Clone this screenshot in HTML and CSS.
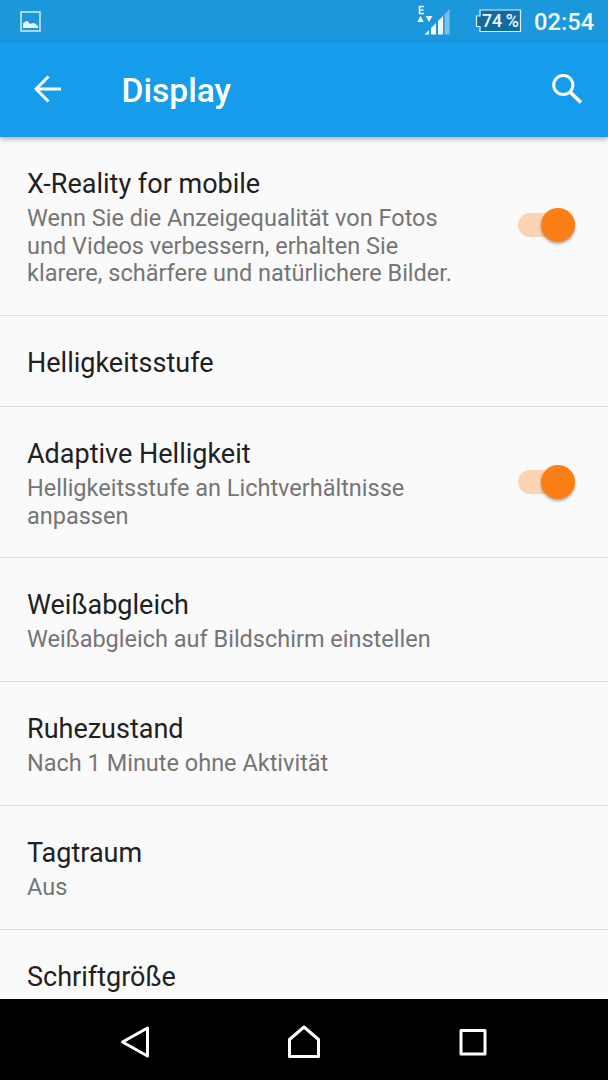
FILE: index.html
```html
<!DOCTYPE html>
<html lang="de">
<head>
<meta charset="utf-8">
<title>Display</title>
<link rel="stylesheet" href="styles.css">
</head>
<body>
<div class="screen">
  <header class="status">
    <svg class="status-image" width="22" height="22" viewBox="0 0 22 22"><rect x="1" y="1" width="19" height="19" fill="none" stroke="#d6edfb" stroke-width="1.5"/><path d="M3 17V12.500L6 10L8 10.500L10 13L13 12L15 12.500L18 15V17Z" fill="#eef6fb"/></svg>
    <svg class="signal" width="34" height="32" viewBox="0 0 34 32"><path d="M2.500 1.500H7M2.500 5H6.500M2.500 8.500H7M2.500 .8V9.200" fill="none" stroke="#f2f8fc" stroke-width="1.500"/><path d="M.3 17L3.500 11L6.800 17ZM8.600 11H15.500L12 17ZM7.500 29.500L12 25V29.500ZM14 29.500V23L19 18V29.500ZM21 29.500V16L26 11V29.500Z" fill="#f2f8fc"/><path d="M27.500 29.500V9.500L32.500 4V29.500Z" fill="#78bfeb"/></svg>
    <div class="battery"><svg width="47" height="24" viewBox="0 0 47 24"><path d="M5 1H45.500V22.500H5V17.500H1.500V7H5Z" fill="#116ba2" stroke="#e2f1fa" stroke-width="1.200"/></svg><span class="charge">74 %</span></div>
    <time class="clock">02:54</time>
  </header>
  <nav class="toolbar">
    <svg class="back" width="28" height="28" viewBox="0 0 28 28"><path d="M14.500 1.500L2 14L14.500 26.500M2 14H27" fill="none" stroke="#fff" stroke-width="3"/></svg>
    <h1 class="heading">Display</h1>
    <svg class="search" width="32" height="32" viewBox="0 0 32 32" fill="none" stroke="#fff"><circle cx="12.300" cy="12" r="9.600" stroke-width="3"/><path d="M19 19L30 29.500" stroke-width="3.700"/></svg>
  </nav>
  <main class="list">
    <section class="row triple"><div><h2 class="title">X-Reality for mobile</h2><p class="summary">Wenn Sie die Anzeigequalität von Fotos<br>und Videos verbessern, erhalten Sie<br>klarere, schärfere und natürlichere Bilder.</p></div><span class="switch"><span class="thumb"></span></span></section>
    <section class="row single"><h2 class="title">Helligkeitsstufe</h2></section>
    <section class="row double"><div><h2 class="title">Adaptive Helligkeit</h2><p class="summary">Helligkeitsstufe an Lichtverhältnisse<br>anpassen</p></div><span class="switch"><span class="thumb"></span></span></section>
    <section class="row"><div><h2 class="title">Weißabgleich</h2><p class="summary">Weißabgleich auf Bildschirm einstellen</p></div></section>
    <section class="row"><div><h2 class="title">Ruhezustand</h2><p class="summary">Nach 1 Minute ohne Aktivität</p></div></section>
    <section class="row"><div><h2 class="title">Tagtraum</h2><p class="summary">Aus</p></div></section>
    <section class="row"><div><h2 class="title">Schriftgröße</h2></div></section>
  </main>
  <footer class="nav">
    <svg width="30" height="34" viewBox="0 0 30 34"><path d="M2.500 17L27.500 3V31Z"/></svg>
    <svg width="34" height="34" viewBox="0 0 34 34"><path d="M2.500 31.500V14.500L17 2L31.500 14.500V31.500Z"/></svg>
    <svg width="30" height="34" viewBox="0 0 30 34"><path d="M3 5.500H27V29H3Z"/></svg>
  </footer>
</div>
</body>
</html>
```
FILE: styles.css
```css
* { box-sizing: border-box; }
body { margin: 0; }
h1, h2, p { margin: 0; font-weight: 400; }
svg { display: block; flex: none; }
.screen {
  width: 608px;
  height: 1080px;
  overflow: hidden;
  display: flex;
  flex-direction: column;
  background: #fafafa;
  font-family: Roboto, "Noto Sans", sans-serif;
}
.status {
  flex: none;
  height: 42px;
  display: flex;
  align-items: flex-start;
  padding: 0 14px 0 20px;
  background: #1b97dc;
  color: #f2f8fc;
}
.status-image { margin-top: 11px; }
.signal { margin: 5px 0 0 375px; }
.battery { position: relative; margin: 9px 0 0 24px; }
.charge {
  position: absolute;
  left: 7px;
  top: 1px;
  font-size: 17.8px;
  line-height: 22px;
  font-weight: 500;
  word-spacing: -1px;
  white-space: nowrap;
}
.clock { margin: 8px 0 0 12px; font-size: 23.7px; line-height: 28px; font-weight: 500; }
.toolbar {
  flex: none;
  position: relative;
  height: 95px;
  display: flex;
  align-items: center;
  padding: 0 25px 0 34px;
  background: #159dec;
  border-bottom: 1px solid #2a94d5;
  box-shadow: 0 2px 5px rgba(0, 0, 0, .32);
  color: #fff;
}
.heading { margin: 4px 0 0 59.5px; font-size: 33.6px; line-height: 40px; font-weight: 500; }
.search { margin-left: auto; }
.list { flex: 1; min-height: 0; overflow: hidden; }
.row {
  height: 124px;
  padding: 31px 33px 0 27px;
  border-bottom: 1px solid #dedede;
  display: flex;
  justify-content: space-between;
}
.triple { height: 179px; }
.single { height: 91px; }
.double { height: 151px; }
.title { font-size: 27px; line-height: 32px; color: #212121; white-space: nowrap; }
.summary { margin-top: 5px; font-size: 23.5px; line-height: 27.6px; color: #757575; white-space: nowrap; }
.switch {
  flex: none;
  width: 57px;
  height: 24px;
  margin-top: 45px;
  border-radius: 12px;
  background: #fcd3b3;
  display: flex;
  align-items: center;
  justify-content: flex-end;
}
.double .switch { margin-top: 32px; }
.thumb {
  width: 34px;
  height: 34px;
  flex: none;
  border-radius: 50%;
  background: #fb7f14;
  box-shadow: 0 2px 3px rgba(0, 0, 0, .32);
}
.nav {
  flex: none;
  height: 81px;
  display: flex;
  align-items: center;
  justify-content: space-between;
  padding: 5px 120px 0 120px;
  background: #000;
}
.nav path { fill: none; stroke: #fff; stroke-width: 3; stroke-linejoin: round; }
```
